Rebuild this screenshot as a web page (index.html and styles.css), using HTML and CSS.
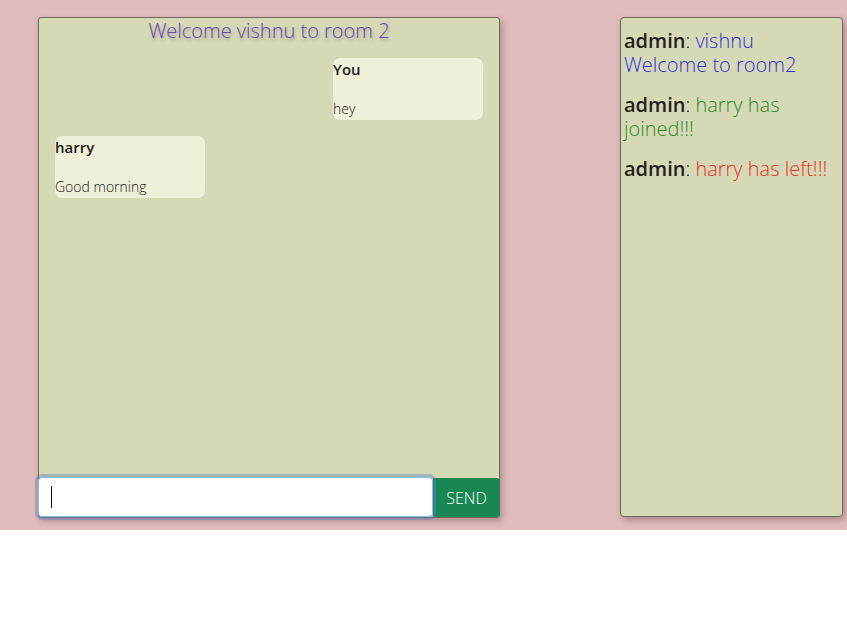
FILE: index.html
```html
<!DOCTYPE html>
<html>
<head>
<meta charset="utf-8">
<link rel="stylesheet" href="styles.css">
</head>
<body>
<div class="page">
  <div class="chat">
    <h2 class="title">Welcome vishnu to room 2</h2>
    <div class="messages">
      <div class="bubble mine">
        <div class="name">You</div>
        <div class="text">hey</div>
      </div>
      <div class="bubble theirs">
        <div class="name">harry</div>
        <div class="text">Good morning</div>
      </div>
    </div>
    <div class="composer">
      <div class="input"><span class="caret"></span></div>
      <button class="send">SEND</button>
    </div>
  </div>
  <div class="log">
    <p><b>admin</b>: <span class="blue">vishnu Welcome to room2</span></p>
    <p><b>admin</b>: <span class="green">harry has joined!!!</span></p>
    <p><b>admin</b>: <span class="red">harry has left!!!</span></p>
  </div>
</div>
</body>
</html>
```
FILE: styles.css
```css
html, body {
  margin: 0;
  padding: 0;
  background: #fff;
  font-family: "Open Sans", "Liberation Sans", sans-serif;
}
.page {
  height: 530px;
  background: #e0bcbc;
  display: flex;
  align-items: flex-start;
  padding: 17px 0 0 38px;
  box-sizing: border-box;
  gap: 120px;
}
.chat {
  width: 462px;
  height: 501px;
  box-sizing: border-box;
  background: #d6d9b5;
  border: 1px solid #6b6b5b;
  border-radius: 3px;
  box-shadow: 2px 3px 6px rgba(80, 40, 40, 0.35);
  display: flex;
  flex-direction: column;
}
.title {
  margin: 0;
  padding-top: 0;
  font-size: 20px;
  font-weight: 300;
  line-height: 26px;
  text-align: center;
  color: #6a4cb4;
  text-shadow: 1px 2px 3px rgba(90, 70, 130, 0.45);
}
.messages {
  flex: 1;
  display: flex;
  flex-direction: column;
  gap: 16px;
  padding: 14px 16px 0 16px;
}
.bubble {
  width: 150px;
  height: 62px;
  box-sizing: border-box;
  background: #eef0da;
  border-radius: 7px;
  color: #222;
  font-size: 14px;
}
.bubble.mine { align-self: flex-end; }
.bubble.theirs { align-self: flex-start; }
.name {
  font-size: 15px;
  font-weight: 600;
  line-height: 20px;
  margin-top: 1px;
}
.text {
  font-weight: 300;
  line-height: 20px;
  margin-top: 20px;
}
.composer {
  display: flex;
  height: 40px;
  margin: 0 -1px 0 -1px;
}
.input {
  flex: 1;
  background: #fff;
  border: 1px solid #86b7fe;
  border-radius: 4px;
  box-shadow: 0 0 0 3px rgba(100, 130, 190, 0.45);
  display: flex;
  align-items: center;
  padding-left: 12px;
  position: relative;
  z-index: 1;
}
.caret {
  width: 1px;
  height: 22px;
  background: #111;
}
.send {
  width: 67px;
  margin-top: 1px;
  border: none;
  background: #198754;
  color: #fff;
  font-family: "Open Sans", "Liberation Sans", sans-serif;
  font-weight: 300;
  font-size: 16px;
  border-radius: 0 4px 4px 0;
  padding: 0;
}
.log {
  width: 223px;
  height: 500px;
  box-sizing: border-box;
  background: #d6d9b5;
  border: 1px solid #6b6b5b;
  border-radius: 4px;
  box-shadow: 2px 3px 6px rgba(80, 40, 40, 0.35);
  padding: 11px 4px 0 3px;
  font-size: 20px;
  line-height: 24px;
  font-weight: 300;
  color: #222;
}
.log p { margin: 0 0 16px 0; }
.log b { font-weight: 600; }
.blue { color: #3333dd; }
.green { color: #2e8b2e; }
.red { color: #e8302a; }
```
